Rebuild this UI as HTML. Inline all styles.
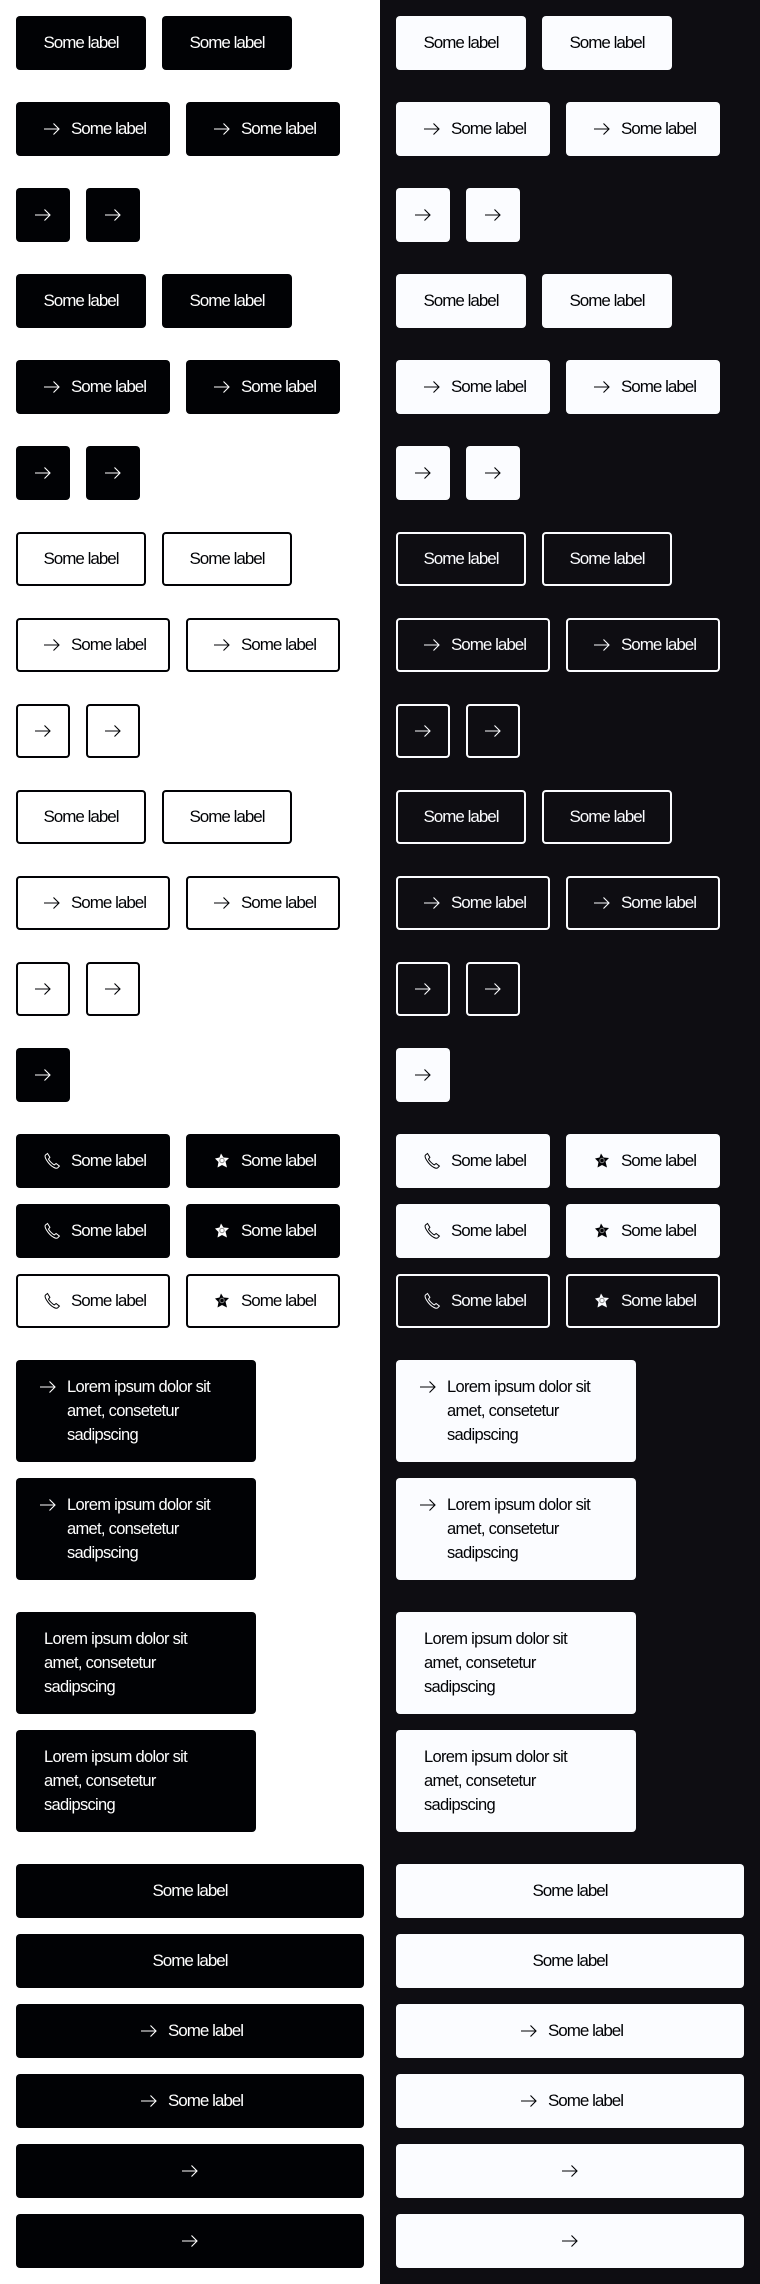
<!DOCTYPE html>
<html><head><meta charset="utf-8"><style>
*{margin:0;padding:0;box-sizing:border-box}
html,body{width:760px;height:2284px;overflow:hidden}
body{position:relative;background:#fff;font-family:"Liberation Sans",sans-serif}
#dark{position:absolute;left:380px;top:0;width:380px;height:2284px;background:#0e0d12}
.b{position:absolute;height:54px;border-radius:4px;display:flex;align-items:center;justify-content:center;font-size:17px;letter-spacing:-1px;white-space:nowrap}
.b svg{width:24px;height:24px;flex:none}
.b svg+span{margin-left:7px}
.f{background:#010205;color:#fff}
.l{background:#fbfcff;color:#010205}
.o{border:2px solid #010205;color:#010205;background:#fff}
.ow{border:2px solid #fbfcff;color:#fbfcff;background:#0e0d12}
.t{height:102px;width:240px;align-items:flex-start;justify-content:flex-start;padding:15px 0 0 20px;line-height:24px;font-size:16.5px;letter-spacing:-0.7px}
.t.ni{padding-left:28px}
</style></head><body>
<div id="dark"></div>
<svg width="0" height="0" style="position:absolute"><defs>
<symbol id="ar" viewBox="0 0 24 24"><path d="M4 12h15M13.5 6.5L19 12l-5.5 5.5" fill="none" stroke="currentColor" stroke-width="1.1"/></symbol>
<symbol id="ph" viewBox="0 0 24 24"><path d="M7.5 4.5l-2 1.5c-.8 .8-.5 2.5 1 5 1.8 3 4.5 6 7.5 7.5 1.8.9 3 .9 3.8.2l1.6-1.6-3.3-2.6-1.8 1.4c-1.8-.8-4.8-3.8-5.8-5.8l1.4-1.8z" fill="none" stroke="currentColor" stroke-width="1"/></symbol>
<symbol id="st" viewBox="0 0 24 24"><path d="M11 4.5l2.5 4 5.5 .5-3.5 3.5 1.5 6-5-2.5-4.5 2.5 1-5.5L5 9.5l4.5-1z" fill="currentColor"/><circle cx="12" cy="11.5" r="2.2" fill="none" stroke="#888" stroke-width="1"/></symbol>
</defs></svg>
<div id="root"></div>
<script>
var h='';
function B(x,y,w,cls,content){h+='<div class="b '+cls+'" style="left:'+x+'px;top:'+y+'px;width:'+w+'px">'+content+'</div>';}
var L='<span>Some label</span>';
function ic(id){return '<svg><use href="#'+id+'"/></svg>';}
for(var side=0;side<2;side++){
 var ox=side*380;
 for(var i=0;i<12;i++){
  var y=16+86*i, g=Math.floor(i/3), k=i%3;
  var cls=side==0?(g<2?'f':'o'):(g<2?'l':'ow');
  if(k==0){B(ox+16,y,130,cls,L);B(ox+162,y,130,cls,L);}
  else if(k==1){B(ox+16,y,154,cls,ic('ar')+L);B(ox+186,y,154,cls,ic('ar')+L);}
  else{B(ox+16,y,54,cls,ic('ar'));B(ox+86,y,54,cls,ic('ar'));}
 }
 var fc=side==0?'f':'l', oc=side==0?'o':'ow';
 B(ox+16,1048,54,fc,ic('ar'));
 var ys=[1134,1204,1274];
 for(var j=0;j<3;j++){var c=j<2?fc:oc;B(ox+16,ys[j],154,c,ic('ph')+L);B(ox+186,ys[j],154,c,ic('st')+L);}
 var txt='<span>Lorem ipsum dolor sit<br>amet, consetetur<br>sadipscing</span>';
 [1360,1478].forEach(function(y){B(ox+16,y,240,fc+' t',ic('ar')+txt);});
 [1612,1730].forEach(function(y){B(ox+16,y,240,fc+' t ni',txt);});
 var fy=[1864,1934,2004,2074,2144,2214];
 for(var m=0;m<6;m++){var c2=m<2?L:(m<4?ic('ar')+L:ic('ar'));B(ox+16,fy[m],348,fc,c2);}
}
document.getElementById('root').innerHTML=h;
</script>
</body></html>
